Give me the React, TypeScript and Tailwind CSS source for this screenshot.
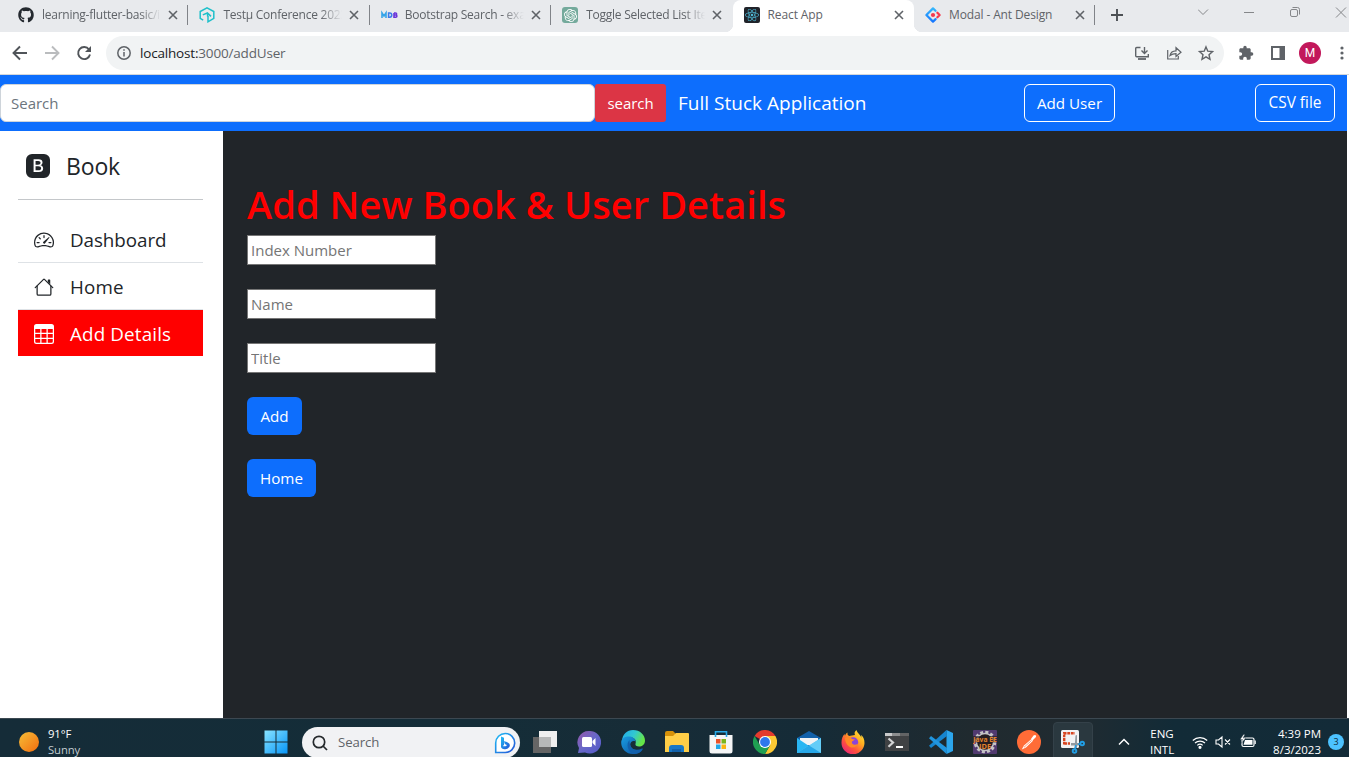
import React from "react";
import { BsSpeedometer2, BsTable, BsBootstrapFill } from "react-icons/bs";
import { FaGithub, FaReact } from "react-icons/fa";
import { SiOpenai } from "react-icons/si";
import { MdExtension } from "react-icons/md";

type SvgProps = { className?: string };

const Close = () => (
  <svg viewBox="0 0 10 10" className="size-[10px] shrink-0" fill="none" stroke="#5f6368" strokeWidth="1.6">
    <path d="M1 1l8 8M9 1l-8 8" />
  </svg>
);

const House = ({ className }: SvgProps) => (
  <svg viewBox="0 0 16 16" className={className} fill="currentColor" fillRule="evenodd">
    <path d="M2 13.5V7h1v6.5a.5.5 0 0 0 .5.5h9a.5.5 0 0 0 .5-.5V7h1v6.5a1.5 1.5 0 0 1-1.5 1.5h-9A1.5 1.5 0 0 1 2 13.5zm11-11V6l-2-2V2.5a.5.5 0 0 1 .5-.5h1a.5.5 0 0 1 .5.5z" />
    <path d="M7.293 1.5a1 1 0 0 1 1.414 0l6.647 6.646a.5.5 0 0 1-.708.708L8 2.207 1.354 8.854a.5.5 0 1 1-.708-.708L7.293 1.5z" />
  </svg>
);

const TestMu = () => (
  <svg viewBox="0 0 16 16" className="size-4" fill="none" stroke="#1fc0ca" strokeWidth="1.5">
    <path d="M4.2 13.2L1.2 11.400V4.5L8 .9l6.800 3.600v6.900L9 14.800V9" />
    <path d="M3.800 7.900l4.600-1.900 3.600 3.400M8.600 6.100v3.500" />
  </svg>
);

const Mdb = () => (
  <svg viewBox="0 0 17 16" className="h-4 w-[17px]" fill="none" strokeWidth="1.6">
    <path d="M1 11V6l2 3 2-3v5" stroke="#35a4e8" />
    <path d="M7.6 6v4.200h1.200c2.600 0 2.600-4.200 0-4.200z" stroke="#3a7bea" />
    <path d="M13 6v4.200h1.700c1.600 0 1.600-2.200 0-2.200H13h1.500c1.500 0 1.500-2 0-2H13" stroke="#6a35d9" />
  </svg>
);

const Ant = () => (
  <svg viewBox="0 0 16 16" className="size-4" fill="none" strokeWidth="2.2" strokeLinecap="round" strokeLinejoin="round">
    <path d="M10.500 3.800L8 1.400 1.400 8 8 14.600l2.600-2.500" stroke="url(#antBlue)" />
    <path d="M12.400 5.700L14.600 8l-2.200 2.300" stroke="#f5384d" />
    <circle cx="8" cy="8" r="2.100" fill="#f5384d" />
    <defs>
      <linearGradient id="antBlue" x1="0" y1="0" x2="0" y2="1">
        <stop stopColor="#35b5fb" />
        <stop offset="1" stopColor="#1677ff" />
      </linearGradient>
    </defs>
  </svg>
);

const tabs = [
  { title: "learning-flutter-basic/ind", icon: <FaGithub className="size-4 text-[#24292f]" /> },
  { title: "Testμ Conference 2023 b", icon: <TestMu /> },
  { title: "Bootstrap Search - exam", icon: <Mdb /> },
  {
    title: "Toggle Selected List Item",
    icon: (
      <span className="flex size-4 items-center justify-center rounded-[3px] bg-[#74aa9c]">
        <SiOpenai className="size-[13px] text-white" />
      </span>
    ),
  },
  {
    title: "React App",
    active: true,
    icon: (
      <span className="flex size-4 items-center justify-center rounded-[2px] bg-[#20232a]">
        <FaReact className="size-[14px] text-[#4fb9d6]" />
      </span>
    ),
  },
  { title: "Modal - Ant Design", icon: <Ant /> },
];

function TabStrip() {
  return (
    <div className="flex h-8 shrink-0 bg-[#e8eaed] pl-[7px]">
      {tabs.map((t, i) => (
        <div
          key={t.title}
          className={
            t.active
              ? "relative flex w-[181.400px] shrink-0 items-center rounded-t-lg bg-white pb-[2px] pl-[11px] before:absolute before:-left-2 before:bottom-0 before:size-2 before:bg-[radial-gradient(circle_at_0_0,transparent_8px,white_8.500px)] after:absolute after:-right-2 after:bottom-0 after:size-2 after:bg-[radial-gradient(circle_at_100%_0,transparent_8px,white_8.500px)]"
              : "flex w-[181.400px] shrink-0 items-center pb-[2px] pl-[11px]"
          }
        >
          <span className="flex w-6 shrink-0">{t.icon}</span>
          <span
            className={
              t.title.length > 20
                ? "mr-[7px] w-[119px] overflow-hidden whitespace-nowrap text-[12px] tracking-[-0.250px] text-[#5f6368] [mask-image:linear-gradient(to_right,black_82%,transparent)]"
                : "mr-[7px] w-[119px] overflow-hidden whitespace-nowrap text-[12px] tracking-[-0.120px] text-[#5f6368]"
            }
          >
            {t.title}
          </span>
          <Close />
          {i !== 3 && !t.active && <span className="ml-auto h-5 w-px bg-[#808388]" />}
        </div>
      ))}
      <svg viewBox="0 0 12 12" className="mt-[9px] ml-[15.600px] size-3 shrink-0" stroke="#4c5054" strokeWidth="1.900">
        <path d="M6 0v12M0 6h12" />
      </svg>
      <div className="ml-[75px] flex items-start pt-[6px]">
        <svg viewBox="0 0 150 13" className="h-[13px] w-[150px] shrink-0" fill="none" stroke="#85878a">
          <path d="M0 3.500l5 5 5-5M46 6.500h10" />
          <rect x="92.500" y="3.500" width="7" height="7" rx="1.500" />
          <path d="M94.500 1.500h5a2 2 0 0 1 2 2v5M138 1.500l10 10M148 1.500l-10 10" />
        </svg>
      </div>
    </div>
  );
}

function Toolbar() {
  return (
    <div className="flex h-[43px] shrink-0 items-start border-b border-[#d5d7da] bg-white pt-1">
      <svg viewBox="0 0 106 34" className="h-[34px] w-[106px] shrink-0" fill="none" strokeWidth="1.900">
        <path d="M27 17H14M20 10.500L13.500 17l6.500 6.500" stroke="#505459" />
        <path d="M45 17h13M52 10.500l6.500 6.500-6.500 6.500" stroke="#babcbe" />
        <path d="M89 13.500A6 6 0 1 0 90 18.500" stroke="#505459" />
        <path d="M91 10v6h-6z" fill="#505459" />
      </svg>
      <div className="flex h-[34px] w-[1118px] shrink-0 items-center rounded-full bg-[#f1f3f4] pl-[11px]">
        <svg viewBox="0 0 14 14" className="size-[14px]" fill="none" stroke="#5f6368" strokeWidth="1.500">
          <circle cx="7" cy="7" r="6.200" />
          <path d="M7 6v4.500M7 3.300v1.500" />
        </svg>
        <span className="ml-[9px] text-[13.500px] leading-5 tracking-[-0.180px] text-[#5f6368]">
          <span className="text-[#202124]">localhost:</span>3000/addUser
        </span>
        <svg viewBox="0 0 80 16" className="mr-[10px] ml-auto h-4 w-20" fill="none" stroke="#5f6368" strokeWidth="1.400">
          <path d="M6.500 2.500H2.700a1 1 0 0 0-1 1v7.200a1 1 0 0 0 1 1h11.600V9M10.500 2v6M7.500 5.500l3 3 3-3" />
          <path d="M4 14h8" strokeWidth="1.800" />
          <path d="M33.700 5v9h10.600v-3M36 10.500c.7-3.500 2.500-4.600 6-4.700V2.700l5 4.500-5 4.300V8.700c-2.600 0-4.200.5-6 1.800z" strokeWidth="1.200" />
          <path d="M72 1.900l1.800 4.300 4.700.4-3.500 3.100 1 4.600-4-2.500-4 2.500 1-4.600-3.500-3.100 4.700-.4z" />
        </svg>
      </div>
      <div className="flex h-[34px] items-center">
        <MdExtension className="ml-[14px] size-4 shrink-0 text-[#5f6368]" />
        <svg viewBox="0 0 14 14" className="ml-[17px] size-[14px] shrink-0">
          <path d="M0 0h14v14H0zM2 2v10h6.500V2z" fillRule="evenodd" fill="#5f6368" />
        </svg>
        <span className="ml-[14px] flex size-[22px] shrink-0 items-center justify-center rounded-full bg-[#c2185b] font-[Roboto] text-[12px] text-white">M</span>
        <svg viewBox="0 0 4 14" className="ml-[19px] h-[14px] w-1 shrink-0" fill="#5f6368">
          <circle cx="2" cy="2" r="1.600" />
          <circle cx="2" cy="7" r="1.600" />
          <circle cx="2" cy="12" r="1.600" />
        </svg>
      </div>
    </div>
  );
}

function Navbar() {
  return (
    <nav className="flex h-14 w-[1347px] shrink-0 items-center bg-[#0d6efd]">
      <input
        placeholder="Search"
        className="h-[38px] w-[595px] rounded-md border border-[#ced4da] bg-white pl-[10px] text-[15px] placeholder:text-[#6c757d]"
      />
      <button className="h-[38px] w-[71px] rounded-[3px] bg-[#dc3545] text-[15px] tracking-[-0.050px] text-white">search</button>
      <span className="ml-[12px] w-[346px] text-[19px] tracking-[0.020px] text-white">Full Stuck Application</span>
      <button className="h-[38px] w-[91px] rounded-md border border-white text-[15.200px] text-white">Add User</button>
      <button className="ml-[140px] h-[38px] w-20 rounded-md border border-white text-[15.400px] text-white">CSV file</button>
    </nav>
  );
}

function Sidebar() {
  return (
    <aside className="w-[223px] shrink-0 bg-white pt-[18px] pr-5 pl-[18px] text-[#212529]">
      <div className="flex h-[51px] items-start border-b border-[#c4c7ca] pt-[5px] pl-2">
        <BsBootstrapFill className="size-6" />
        <span className="ml-4 text-[23px] leading-6 tracking-[-0.150px]">Book</span>
      </div>
      <ul className="mt-4 text-[18.800px]">
        <li className="flex h-[47px] items-center border-b border-[#dee2e6] pt-[2px] pl-4">
          <BsSpeedometer2 className="size-5" />
          <span className="ml-4 tracking-[-0.050px]">Dashboard</span>
        </li>
        <li className="flex h-[47px] items-center border-b border-[#dee2e6] pt-[2px] pl-4">
          <House className="size-5" />
          <span className="ml-4 tracking-[0.150px]">Home</span>
        </li>
        <li className="flex h-[46px] items-center bg-[#ff0000] pt-[2px] pl-4 text-white">
          <BsTable className="size-5" />
          <span className="ml-4 tracking-[0.150px]">Add Details</span>
        </li>
      </ul>
    </aside>
  );
}

function AddForm() {
  return (
    <main className="flex w-[1124px] flex-col items-start bg-[#212529] pt-12 pl-6">
      <h1 className="h-14 text-[38px] leading-[50px] font-semibold tracking-[0.070px] whitespace-nowrap text-[#ff0000]">Add New Book &amp; User Details</h1>
      <div className="flex flex-col gap-6">
        {["Index Number", "Name", "Title"].map((label) => (
          <input
            key={label}
            placeholder={label}
            className="h-[30px] w-[189px] border border-[#767676] bg-white px-[3px] text-[15px] placeholder:text-[#757575]"
          />
        ))}
      </div>
      <button className="mt-6 h-[38px] w-[55px] rounded-md bg-[#0d6efd] text-[15.200px] text-white">Add</button>
      <button className="mt-6 h-[38px] w-[69px] rounded-md bg-[#0d6efd] text-[15.200px] text-white">Home</button>
    </main>
  );
}

const ic = "size-6";

const Windows = ({ className }: SvgProps) => (
  <svg viewBox="0 0 24 24" className={className}>
    <defs>
      <linearGradient id="win" x1="0" y1="0" x2="24" y2="24" gradientUnits="userSpaceOnUse">
        <stop stopColor="#8be5ff" />
        <stop offset="1" stopColor="#0494f8" />
      </linearGradient>
    </defs>
    <path d="M.5.500h11v11H.500zM12.500.500h11v11h-11zM.500 12.500h11v11H.500zM12.500 12.500h11v11h-11z" fill="url(#win)" />
  </svg>
);

const Bing = () => (
  <svg viewBox="0 0 22 22" className="size-[22px]">
    <defs>
      <linearGradient id="bing" x1="0" y1="0" x2="1" y2="1">
        <stop stopColor="#20bdf5" />
        <stop offset="1" stopColor="#2454d6" />
      </linearGradient>
    </defs>
    <path d="M1.700 20.500V11A9.500 9.500 0 1 1 11 20.500z" fill="white" stroke="url(#bing)" strokeWidth="1.600" />
    <path d="M7 4.500l3 1.200V13l-1.200 1c2.400.6 4-.3 4-1.100l-2-1-1-3c3.500 1 6 2 6 4.300 0 3.500-5.500 5-7.800 3.300L7 15.300z" fill="url(#bing)" />
  </svg>
);

const TaskView = () => (
  <svg viewBox="0 0 24 24" className={ic}>
    <path d="M6 1h18v16H6z" fill="#efefef" />
    <path d="M0 7h18v16H0z" fill="#656565" />
    <path d="M6 7h12v10H6z" fill="#b7b8b8" />
  </svg>
);

const Chat = () => (
  <svg viewBox="0 0 24 24" className={ic}>
    <defs>
      <linearGradient id="chat" x1="0" y1="0" x2="1" y2="1">
        <stop stopColor="#9558a9" />
        <stop offset=".5" stopColor="#6868c9" />
        <stop offset="1" stopColor="#5258c8" />
      </linearGradient>
    </defs>
    <path d="M12 1a11.300 11.300 0 1 1-4 21.500L1 23l1-5A11.300 11.300 0 0 1 12 1z" fill="url(#chat)" />
    <rect x="5" y="7" width="10" height="10" rx="1.500" fill="white" />
    <path d="M15.500 11l3-3v8l-3-3z" fill="white" />
  </svg>
);

const Edge = () => (
  <svg viewBox="0 0 24 24" className={ic}>
    <defs>
      <linearGradient id="edgeTop" x1="0" x2="1" y1="0" y2=".4">
        <stop stopColor="#20a9ee" />
        <stop offset=".55" stopColor="#32c8d0" />
        <stop offset="1" stopColor="#66e647" />
      </linearGradient>
      <linearGradient id="edgeBase" x1="0" y1="0" x2="1" y2="1">
        <stop stopColor="#1a9de2" />
        <stop offset="1" stopColor="#0b50a0" />
      </linearGradient>
    </defs>
    <path d="M1 11C1.500 4 6 0 12 0c7 0 12 5 12 10.500 0 4-3 6-6 6-2.500 0-4-1-3.500-2.500C16 9 12 7 8 7c-3 0-5.500 1.500-7 4z" fill="url(#edgeTop)" />
    <path d="M.2 13C0 8 4 6.500 8 6.500c3 0 6.500 2 6.500 5-3-1.500-6 1-5 4.500 1.200 4 7 5 11.500 2.500.7-.3 1 .1.600.7C19.500 22.500 16 24 12 24 5 24 .5 19 .2 13z" fill="url(#edgeBase)" />
    <path d="M8.500 10c-4 4-1.500 12 4 14 4 0 7.300-1.500 9.200-4.800C14 22 8 18.500 8.500 10z" fill="#1260ac" />
  </svg>
);

const Explorer = () => (
  <svg viewBox="0 0 24 24" className={ic}>
    <path d="M0 3a2 2 0 0 1 2-2h6l3 3-3 4H0z" fill="#d69109" />
    <path d="M0 6h8l3-3h12a1 1 0 0 1 1 1v18H0z" fill="#ffce47" />
    <path d="M4 22v-4a3 3 0 0 1 3-3h9a3 3 0 0 1 3 3v4z" fill="#1877c6" />
    <path d="M7 19h9v3H7z" fill="#1261aa" />
  </svg>
);

const Store = () => (
  <svg viewBox="0 0 24 24" className={ic}>
    <path d="M6.500 6V1.800h11V6" fill="none" stroke="#27a9e8" strokeWidth="1.600" />
    <path d="M.500 5h23v16a2.500 2.500 0 0 1-2.500 2.500H3A2.500 2.500 0 0 1 .5 21z" fill="#f4f5f6" />
    <path d="M7 9h4.500v4.500H7z" fill="#ec5128" />
    <path d="M12.500 9H17v4.500h-4.500z" fill="#7bb51b" />
    <path d="M7 14.500h4.500V19H7z" fill="#21a7e8" />
    <path d="M12.500 14.500H17V19h-4.500z" fill="#fab512" />
    <path d="M6.500 7V5M17.500 7V5" stroke="#27a9e8" strokeWidth="1.600" />
  </svg>
);

const Chrome = () => (
  <svg viewBox="0 0 24 24" className={ic}>
    <path d="M12 12L1.600 6A12 12 0 0 1 22.400 6z" fill="#e33b2e" />
    <path d="M12 12V6h10.400A12 12 0 0 1 12 24l5.200-9z" fill="#fcc934" />
    <path d="M12 12l5.200 3L12 24A12 12 0 0 1 1.600 6l5.200 9z" fill="#1fa052" />
    <circle cx="12" cy="12" r="6" fill="white" />
    <circle cx="12" cy="12" r="4.900" fill="#2f78ec" />
  </svg>
);

const Mail = () => (
  <svg viewBox="0 0 24 24" className={ic}>
    <path d="M0 8l12-7 12 7v8H0z" fill="#1260a9" />
    <path d="M3 8h18v7H3z" fill="#f1f3f5" />
    <path d="M0 8l12 8 12-8v15H0z" fill="#29b6f3" />
    <path d="M0 23L24 8v15z" fill="#64cdf8" />
    <path d="M0 23l12-7.500L24 23z" fill="#27a8e9" />
  </svg>
);

const Firefox = () => (
  <svg viewBox="0 0 24 24" className={ic}>
    <defs>
      <linearGradient id="fox" x1="1" y1="0" x2=".2" y2="1">
        <stop stopColor="#fff044" />
        <stop offset=".4" stopColor="#ffad1f" />
        <stop offset=".7" stopColor="#ff533c" />
        <stop offset="1" stopColor="#e92279" />
      </linearGradient>
    </defs>
    <path d="M15.500 0c-2.500 2-2 4-1.500 5L8 6 6.500 4.500V2.500C5 3.500 4 5 4 6l-.5-2C1.500 6 .5 9 .5 12.500A11.500 11.500 0 0 0 23.500 13c0-4-1.500-6.500-3.500-8l.5 3C19.500 4.500 16 3 15.500 0z" fill="url(#fox)" />
    <circle cx="12.200" cy="12.300" r="5" fill="#8b45d8" />
    <path d="M4 8c3-2 6-1 7 1l3 .5-3 2c-1 3 3 4.500 6 2-1 5-8 5.500-11 1C4.500 12 4 10 4 8z" fill="#ff8925" />
  </svg>
);

const Terminal = () => (
  <svg viewBox="0 0 24 24" className={ic}>
    <path d="M1 3h22a1 1 0 0 1 1 1v17H0V4a1 1 0 0 1 1-1z" fill="#404244" />
    <path d="M0 3h7v3H0z" fill="#c9cacb" />
    <path d="M7 3h8v3H7z" fill="#8d8e8f" />
    <path d="M15 3h9v3h-9z" fill="#636465" />
    <path d="M3.500 8.500L8 12.500l-4.500 4.300" fill="none" stroke="#d3d4d5" strokeWidth="2.200" />
    <path d="M11 17h7" stroke="white" strokeWidth="2" />
  </svg>
);

const VsCode = () => (
  <svg viewBox="0 0 24 24" className={ic}>
    <path d="M17.500 0L24 3v18l-6.500 3z" fill="#2ca6ed" />
    <path d="M17.500 0L0 15.700l2 2.300L18 6z" fill="#1685cf" />
    <path d="M17.500 24L0 8.300 2 6l16 12z" fill="#2196df" />
  </svg>
);

const JavaEE = () => (
  <svg viewBox="0 0 24 24" className={ic}>
    <rect width="24" height="24" rx="1" fill="#513a70" />
    <circle cx="12" cy="12" r="9.800" fill="none" stroke="#c5c4c6" strokeWidth="3" strokeDasharray="3 2.130" />
    <circle cx="12" cy="12" r="8.600" fill="#251d22" stroke="#c5c4c6" strokeWidth="1.500" />
    <path d="M0 6h24v6.500H0z" fill="#251d22" opacity=".65" />
    <text x="12" y="11.500" textAnchor="middle" textLength="23.500" lengthAdjust="spacingAndGlyphs" fontSize="6.500" fontWeight="bold" fill="#e2822c">Java EE</text>
    <text x="12" y="18.500" textAnchor="middle" textLength="12" lengthAdjust="spacingAndGlyphs" fontSize="6.500" fontWeight="bold" fill="#e2822c">IDE</text>
  </svg>
);

const Postman = () => (
  <svg viewBox="0 0 24 24" className={ic}>
    <circle cx="12" cy="12" r="12" fill="#ff6c37" />
    <path d="M4.800 19.500l2.200-4 7.500-6.500 1.500 1.700L9 17.500z" fill="#fff" />
    <path d="M14 9l2.500-3.500c2-1.500 3.500.5 2 2L15.500 10.500z" fill="white" />
    <path d="M7 17.300l7.500-6.800" stroke="#ff6c37" strokeWidth=".7" />
  </svg>
);

const Snip = () => (
  <svg viewBox="0 0 24 24" className={ic}>
    <rect width="18" height="18" rx="1.500" fill="#f2f3f4" />
    <path d="M3.200 14.500V3.200H14" fill="none" stroke="#d74520" strokeWidth="2.400" strokeDasharray="2.800 .8" />
    <path d="M3.500 13.500h5.500" stroke="#d74520" strokeWidth="2.400" strokeDasharray="2.600 .8" />
    <path d="M14.500 5.500L16 5v13h-2.500zM10 13h8v2.500h-8z" fill="#929aa0" />
    <path d="M15 15l-1 4M17 14.300l3-.3" stroke="#219ee5" strokeWidth="1.500" />
    <circle cx="13.500" cy="21" r="1.800" fill="none" stroke="#219ee5" strokeWidth="1.900" />
    <circle cx="21.200" cy="13.500" r="1.800" fill="none" stroke="#219ee5" strokeWidth="1.900" />
  </svg>
);

const apps = [TaskView, Chat, Edge, Explorer, Store, Chrome, Mail, Firefox, Terminal, VsCode, JavaEE, Postman, Snip];

function Taskbar() {
  return (
    <footer className="flex h-12 shrink-0 items-center border-t border-[#3c4851] bg-[linear-gradient(90deg,#152c38_0%,#142d38_35%,#172c37_48%,#152b37_60%,#202a2f_72%,#202b31_80%,#122b37_87%,#132b38_100%)] pb-px text-white">
      <div className="flex w-[264px] shrink-0 items-center pl-[19px]">
        <span className="size-5 rounded-full bg-linear-to-br from-[#f4bd36] to-[#f26b0b]" />
        <div className="ml-[9px] text-[11.300px] leading-4 tracking-[-0.100px]">
          <div>91°F</div>
          <div className="text-[#c2cbd0]">Sunny</div>
        </div>
      </div>
      <Windows className="size-6 shrink-0" />
      <div className="mt-px ml-[14px] flex h-[31px] w-[218px] shrink-0 items-center rounded-full bg-[#f1f2f4] px-[10px] pr-[4px]">
        <svg viewBox="0 0 16 16" className="size-4" fill="none" stroke="#25292c" strokeWidth="1.700">
          <circle cx="7" cy="7" r="5.700" />
          <path d="M11 11l4 4" />
        </svg>
        <span className="mr-auto ml-[10px] text-[13.200px] tracking-[-0.100px] text-[#606468]">Search</span>
        <Bing />
      </div>
      <div className="ml-[5px] flex shrink-0 gap-1">
        {apps.map((App, i) => (
          <span
            key={i}
            className={
              i === 12
                ? "flex h-10 w-10 items-center justify-center rounded-[4px] border border-[#344149] bg-[#2a383f]"
                : "flex h-10 w-10 items-center justify-center"
            }
          >
            <App />
          </span>
        ))}
      </div>
      <svg viewBox="0 0 12 8" className="ml-[25px] h-2 w-3 shrink-0" fill="none" stroke="white" strokeWidth="1.500">
        <path d="M1 6.500l5-5 5 5" />
      </svg>
      <div className="ml-5 w-[24px] text-center text-[11.500px] leading-4"><div>ENG</div><div>INTL</div></div>
      <svg viewBox="0 0 64 16" className="ml-[18px] h-4 w-16 shrink-0" fill="none" stroke="white" strokeWidth="1.200">
        <path d="M.8 6.500a10.500 10.500 0 0 1 14.400 0M3 9a7.500 7.500 0 0 1 10 0M5.300 11.400a4 4 0 0 1 5.400 0" />
        <circle cx="8" cy="13.300" r="1" fill="white" />
        <path d="M24 6v4h2.500l3.500 3V3l-3.500 3zM33 5.500l5 5M38 5.500l-5 5" strokeWidth="1.100" />
        <rect x="50" y="4" width="12" height="8.500" rx="1.500" />
        <path d="M63.200 6.500v3.500" />
        <path d="M53 6h7.500v4.800h-9z" fill="white" stroke="none" />
        <path d="M51.500.500L48 5.500h2.500L49 9.500l5-5.500h-3l2-3.500z" fill="white" stroke="#132b38" strokeWidth=".4" />
      </svg>
      <div className="ml-[7px] w-[58px] shrink-0 text-right text-[11.500px] leading-4 whitespace-nowrap"><div>4:39 PM</div><div>8/3/2023</div></div>
      <span className="ml-[7px] flex size-4 shrink-0 items-center justify-center rounded-full bg-[#4cc2ff] text-[9px] text-[#102a38]">3</span>
    </footer>
  );
}

export default function App() {
  return (
    <div className="flex h-[757px] w-[1349px] flex-col overflow-hidden bg-white font-['Open_Sans','Noto_Sans',sans-serif]">
      <TabStrip />
      <Toolbar />
      <Navbar />
      <div className="flex h-[587px] shrink-0">
        <Sidebar />
        <AddForm />
      </div>
      <Taskbar />
    </div>
  );
}
